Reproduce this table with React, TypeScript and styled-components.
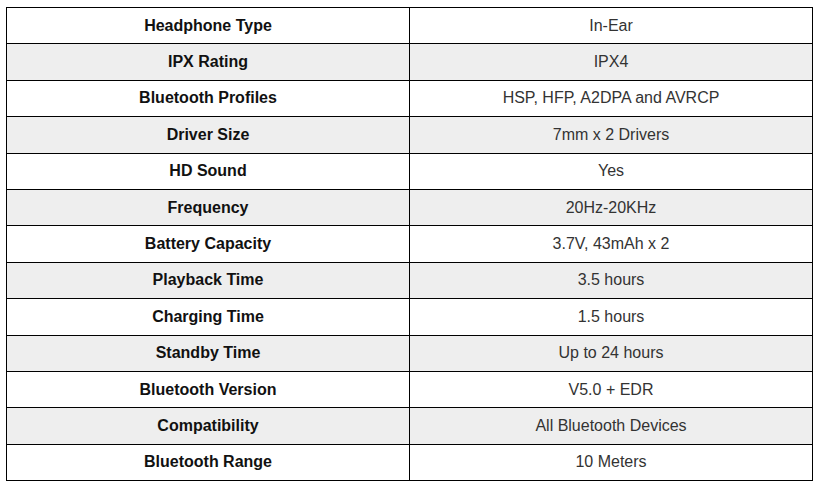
import styled, { createGlobalStyle } from "styled-components";

type Spec = {
  label: string;
  value: string;
};

const specs: Spec[] = [
  { label: "Headphone Type", value: "In-Ear" },
  { label: "IPX Rating", value: "IPX4" },
  { label: "Bluetooth Profiles", value: "HSP, HFP, A2DPA and AVRCP" },
  { label: "Driver Size", value: "7mm x 2 Drivers" },
  { label: "HD Sound", value: "Yes" },
  { label: "Frequency", value: "20Hz-20KHz" },
  { label: "Battery Capacity", value: "3.7V, 43mAh x 2" },
  { label: "Playback Time", value: "3.5 hours" },
  { label: "Charging Time", value: "1.5 hours" },
  { label: "Standby Time", value: "Up to 24 hours" },
  { label: "Bluetooth Version", value: "V5.0 + EDR" },
  { label: "Compatibility", value: "All Bluetooth Devices" },
  { label: "Bluetooth Range", value: "10 Meters" },
];

const GlobalStyle = createGlobalStyle`
  html, body {
    margin: 0;
    padding: 0;
    background: #ffffff;
  }
  body {
    font-family: "Liberation Sans", Arial, sans-serif;
  }
`;

const Page = styled.div`
  padding: 7px 5px 0 6px;
`;

const SpecTable = styled.table`
  width: 807px;
  border-collapse: collapse;
  table-layout: fixed;
  border: 1px solid #000;
`;

const SpecRow = styled.tr<{ $shaded: boolean }>`
  height: 36.4px;
  background: ${(p) => (p.$shaded ? "#eeeeee" : "#ffffff")};
`;

const Cell = styled.td<{ $label?: boolean }>`
  width: 50%;
  border: 1px solid #000;
  padding: 0 8px;
  text-align: center;
  vertical-align: middle;
  font-size: 16px;
  line-height: 18px;
  font-weight: ${(p) => (p.$label ? 700 : 400)};
  color: ${(p) => (p.$label ? "#111" : "#333")};
`;

export default function App() {
  return (
    <>
      <GlobalStyle />
      <Page>
        <SpecTable>
          <tbody>
            {specs.map((spec, i) => (
              <SpecRow key={spec.label} $shaded={i % 2 === 1}>
                <Cell $label>{spec.label}</Cell>
                <Cell>{spec.value}</Cell>
              </SpecRow>
            ))}
          </tbody>
        </SpecTable>
      </Page>
    </>
  );
}
